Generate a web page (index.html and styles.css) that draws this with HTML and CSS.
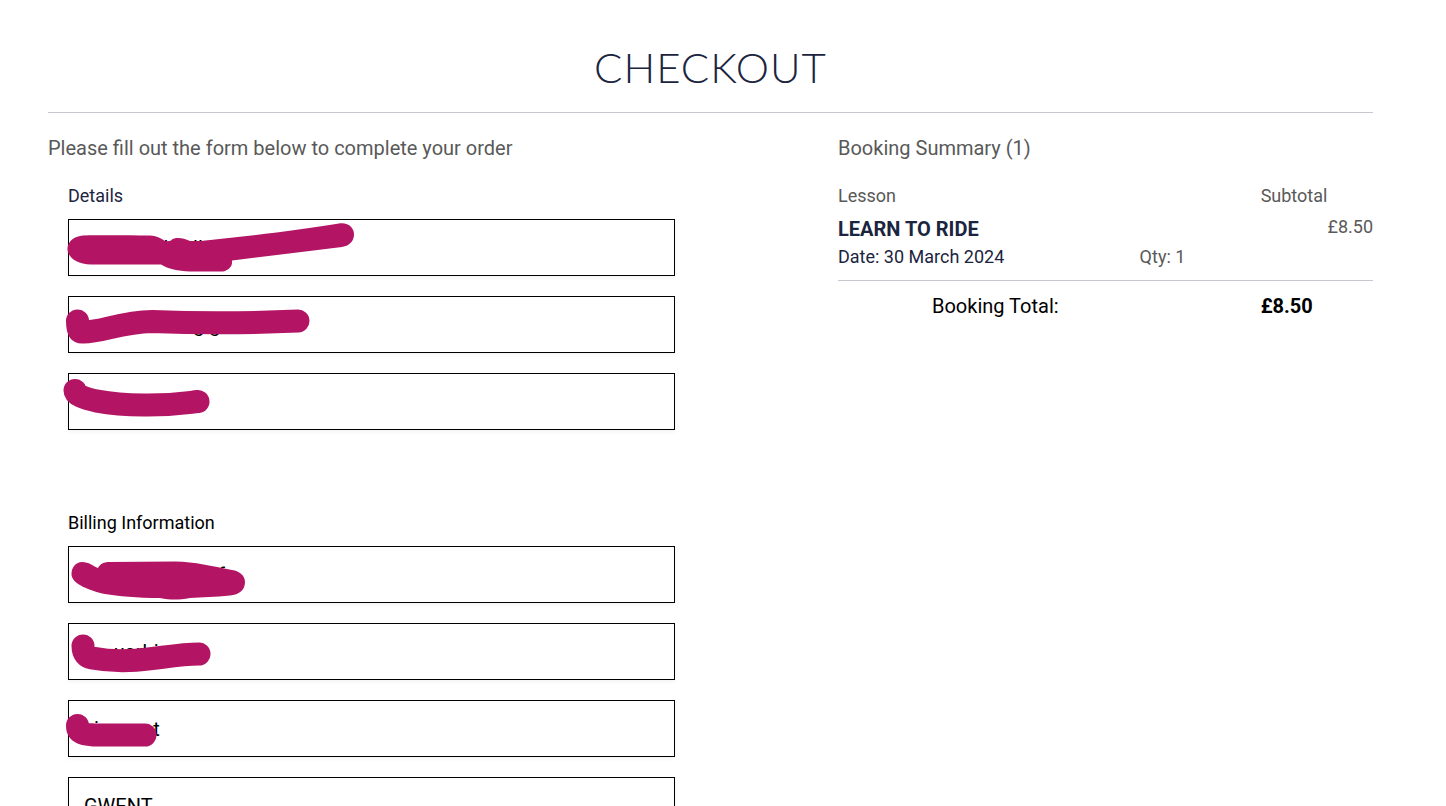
FILE: index.html
```html
<!DOCTYPE html>
<html lang="en">
<head>
<meta charset="utf-8">
<title>Checkout</title>
<link rel="stylesheet" href="styles.css">
</head>
<body>
<main class="page">
  <h1 class="title">CHECKOUT</h1>
  <div class="columns">
    <form class="form">
      <h2 class="intro">Please fill out the form below to complete your order</h2>
      <fieldset class="group">
        <legend class="legend">Details</legend>
        <div class="field">
          <input class="input" type="text" aria-label="Full name" value="                l     ll">
          <svg class="mark" width="320" height="76" viewBox="0 9 320 76" aria-hidden="true"><path d="M23 25.500C50 25 70 25.500 90 25.500C96 25.500 101 28 105 31C109 31.500 111 31 112 29.500C117 27 123 28 130 31L141 31C190 26 240 20 279 13.500C298 11 299 35 282 37L172 50.500C173 57 167 61.500 161 61.500L130 61.500C118 61 108 59 101 54.500L31 54.500C15 54 7 46 7.500 38C8 31 15 26 23 25.500Z"/></svg>
        </div>
        <div class="field">
          <input class="input" type="text" aria-label="Email" value="                      g g">
          <svg class="mark" width="320" height="76" viewBox="0 1 320 76" aria-hidden="true"><path d="M17.500 26C17.500 35 19 37 22 37C40 38 60 27 92 26.500C130 28 170 29 238 26" class="brush"/></svg>
        </div>
        <div class="field">
          <input class="input" type="tel" aria-label="Phone">
          <svg class="mark" width="320" height="76" viewBox="0 0 320 76" aria-hidden="true"><path d="M15 17.500C15 26 50 32.500 88 32C115 32 125 30 138 28.500" class="brush"/></svg>
        </div>
      </fieldset>
      <fieldset class="group">
        <legend class="legend">Billing Information</legend>
        <div class="field">
          <input class="input" type="text" aria-label="Address" value="                           f">
          <svg class="mark" width="320" height="76" viewBox="0 0 320 76" aria-hidden="true"><path d="M22 16C29 16 33 20 38 22C40 18 44 16 49 16L115 15.500C136 16 151 20 172 24C180 25 185 30 185 36C185 44 179 49 170 49.500C155 51 142 51 130 52C118 54 111 54 100 52C77 52 58 50 45 48C31 45 11 38 11.500 28C11.500 21 16 16 22 16Z"/></svg>
        </div>
        <div class="field">
          <input class="input" type="text" aria-label="Town" value="      uarbi">
          <svg class="mark" width="320" height="76" viewBox="0 0 320 76" aria-hidden="true"><path d="M23 23C23 31 27 34 32 35C75 43 105 31 139 31" class="brush"/></svg>
        </div>
        <div class="field">
          <input class="input" type="text" aria-label="City" value="  i           t">
          <svg class="mark" width="320" height="76" viewBox="0 0 320 76" aria-hidden="true"><path d="M17.500 25.500C17.500 33 23 35 40 35L85 35" class="brush"/></svg>
        </div>
        <div class="field">
          <input class="input" type="text" aria-label="County" value="GWENT">
        </div>
      </fieldset>
    </form>
    <section class="summary">
      <h2 class="intro">Booking Summary (1)</h2>
      <table class="table">
        <thead>
          <tr><th class="lesson" scope="col">Lesson</th><th class="qty"></th><th class="price" scope="col">Subtotal</th></tr>
        </thead>
        <tbody>
          <tr class="item">
            <td><strong class="name">LEARN TO RIDE</strong><span class="date">Date: 30 March 2024</span></td>
            <td class="count">Qty: 1</td>
            <td class="amount">£8.50</td>
          </tr>
        </tbody>
        <tfoot>
          <tr class="total"><th class="total-label" colspan="2" scope="row">Booking Total:</th><td><strong>£8.50</strong></td></tr>
        </tfoot>
      </table>
    </section>
  </div>
</main>
</body>
</html>
```
FILE: styles.css
```css
* { box-sizing: border-box; }
html { overflow: hidden; }
body {
  margin: 0;
  background: #fff;
  color: #595959;
  font: 400 18px/28px Roboto, "Liberation Sans", sans-serif;
}
.page { padding: 43px 73px 0 48px; }
.title {
  margin: 0;
  padding-bottom: 21px;
  border-bottom: 1px solid #c8c8d0;
  color: #1b2540;
  font: 300 42px/48px Lato, sans-serif;
  letter-spacing: 1px;
  text-align: center;
}
.columns {
  display: grid;
  grid-template-columns: 627fr 535fr;
  column-gap: 163px;
  padding-top: 20px;
}
.intro { margin: 0; font-size: 20px; font-weight: 400; line-height: 30px; }
.group { margin: 0 0 60px; padding: 0 0 0 20px; border: 0; min-width: 0; }
.legend { padding: 20px 0 10px; color: #1b2540; line-height: 26px; }
.group + .group .legend { color: #000; padding-top: 0; }
.field { position: relative; margin-bottom: 20px; }
.input {
  display: block;
  width: 100%;
  height: 57px;
  padding: 0 15px;
  border: 1px solid #000;
  border-radius: 0;
  background: #fff;
  box-shadow: 0 2px 4px #0000000d;
  color: #000;
  font: inherit;
  font-size: 20px;
}
.mark { position: absolute; left: -8px; top: 0; fill: #b31564; pointer-events: none; }
.brush { fill: none; stroke: #b31564; stroke-width: 23; stroke-linecap: round; stroke-linejoin: round; }
.table { width: 100%; margin-top: 19px; border-collapse: collapse; table-layout: fixed; }
.table th, .table td { padding: 0; text-align: left; font-weight: 400; }
.table .qty { width: 23%; }
.table .price { width: 21%; }
.item { border-bottom: 1px solid #c8c8d0; }
.table .item td { padding: 5px 0 9px; vertical-align: bottom; }
.name { display: block; color: #1b2540; font-size: 20px; font-weight: 700; }
.date { color: #1b2540; }
.table .item .count { padding-left: 2px; }
.table .item .amount { padding-top: 3px; text-align: right; vertical-align: top; }
.total { color: #000; font-size: 20px; }
.table .total th, .table .total td { padding-top: 11px; }
.table .total .total-label { padding-left: 94px; }
```
